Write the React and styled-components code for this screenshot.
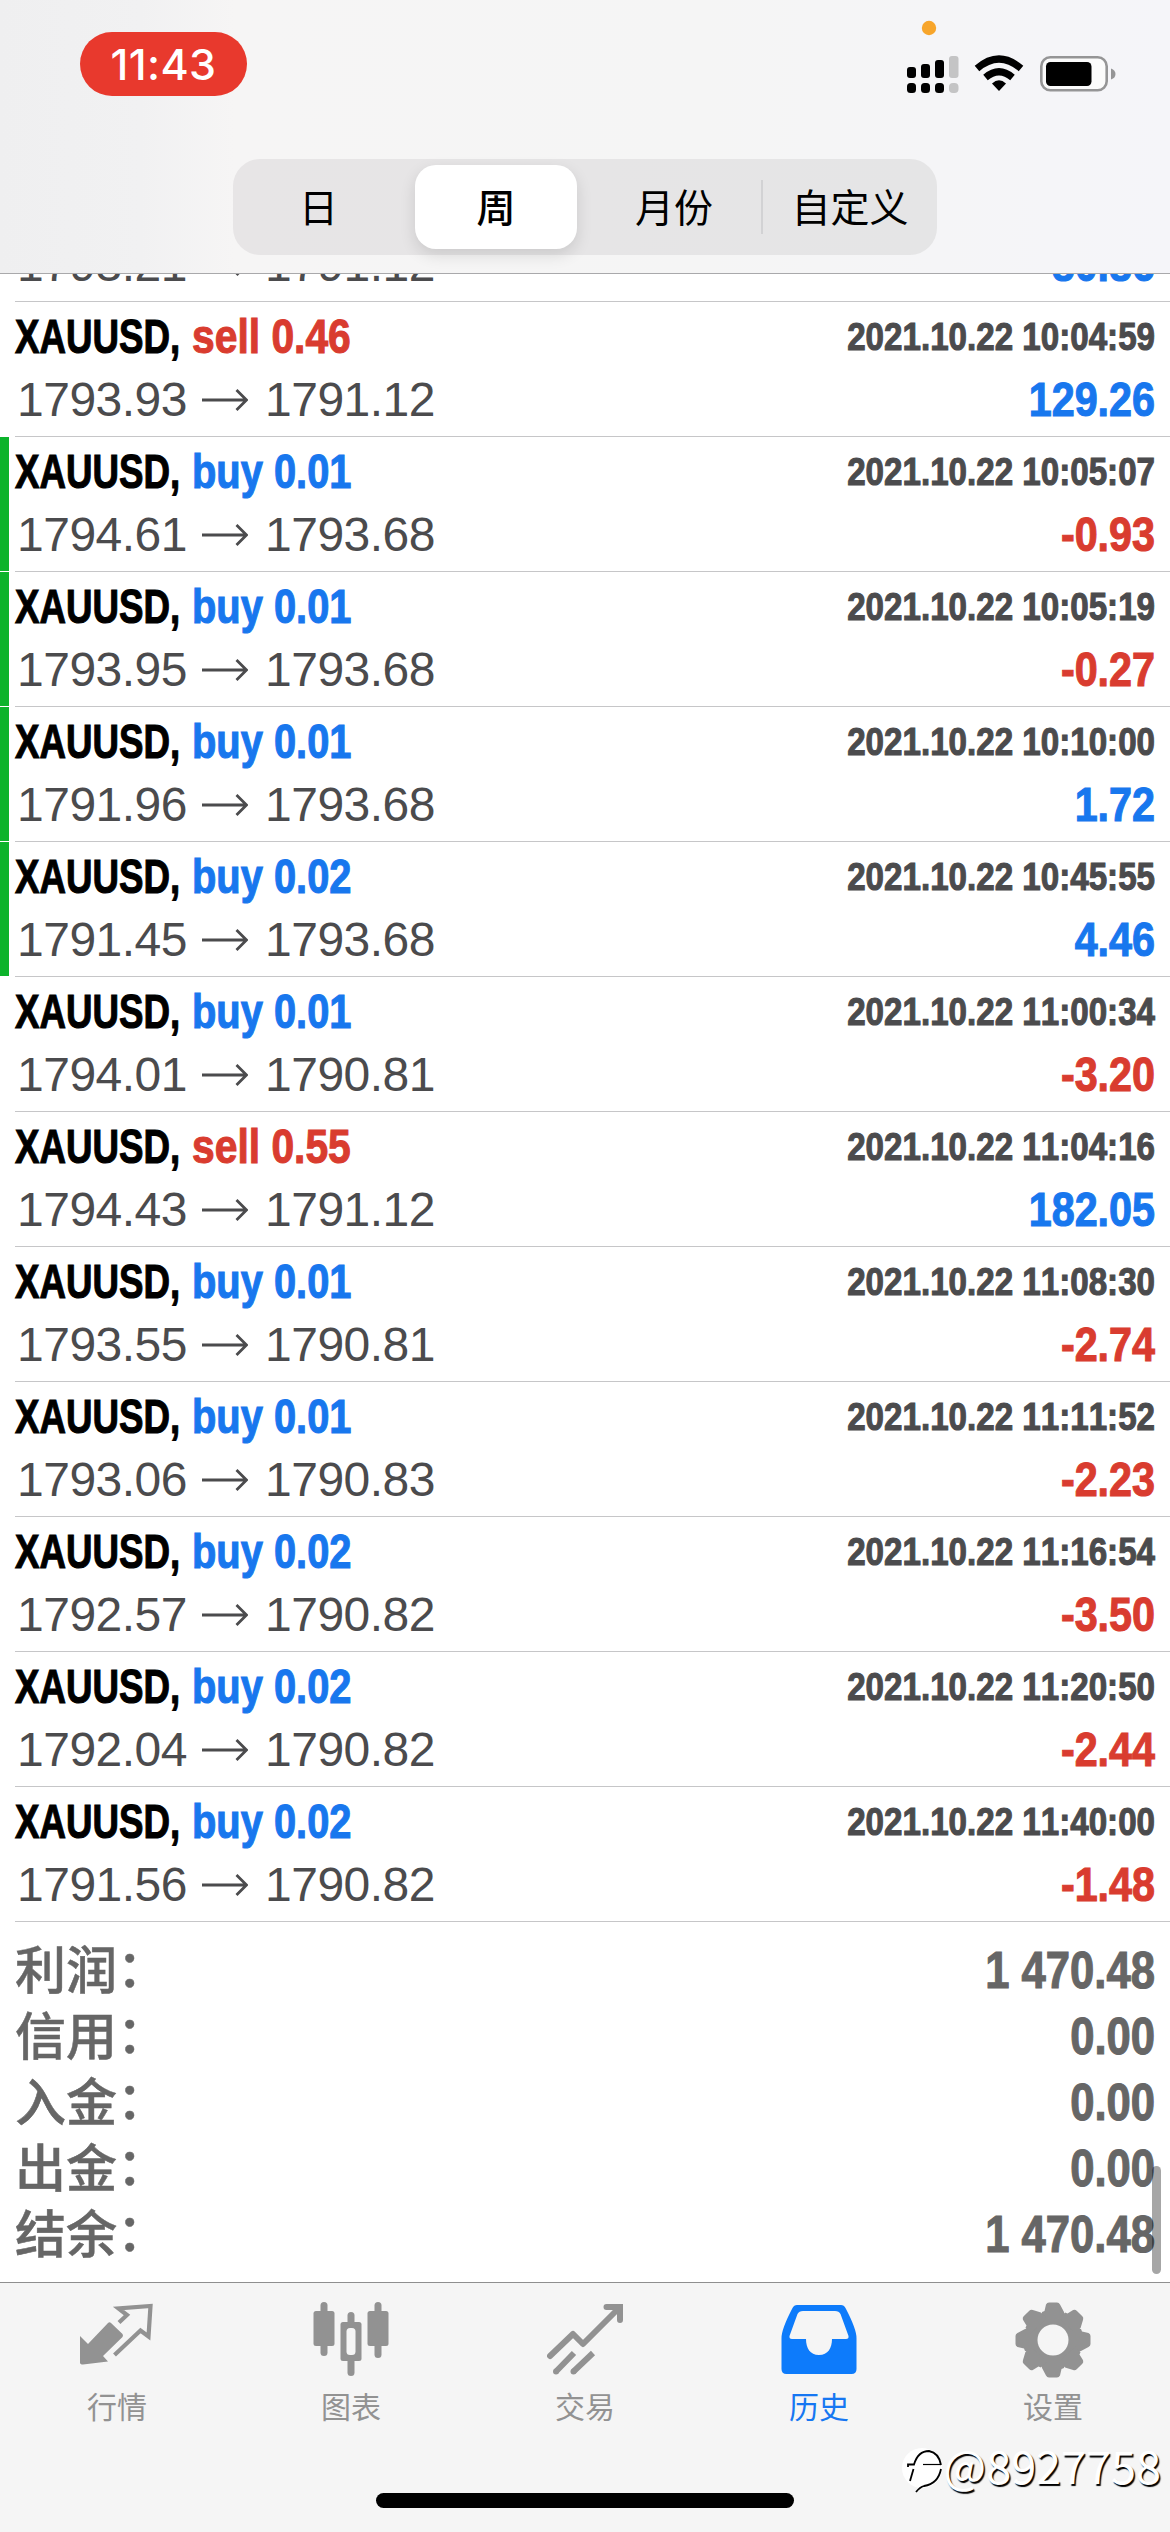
import React from 'react';
import styled, { createGlobalStyle } from 'styled-components';

const GlobalStyle = createGlobalStyle`
* {
    padding: 0;
    margin: 0;
    box-sizing: border-box;
}
body {
    background: #fff;
    font-family: 'Liberation Sans', 'Noto Sans CJK SC', sans-serif;
    font-kerning: none;
}
`;

const Screen = styled.div`
width: 1170px;
height: 2532px;
display: flex;
flex-direction: column;
overflow: hidden;
position: relative;
background: #fff;
`;

const Header = styled.header`
height: 274px;
flex: none;
display: flex;
flex-direction: column;
align-items: center;
background: linear-gradient(90deg, #efeff0 0%, #f1f1f2 12%, #f6f5f5 20%, #f5f5f5 60%, #f5f5f9 100%);
border-bottom: 1px solid #a9a9ab;
`;

const StatusBar = styled.div`
width: 100%;
height: 159px;
display: flex;
justify-content: space-between;
align-items: flex-start;
padding: 20px 54px 0 80px;
`;

const TimePill = styled.div`
width: 167px;
height: 64px;
margin-top: 12px;
border-radius: 32px;
background: #e8392d;
color: #fff;
font-family: Inter, sans-serif;
font-size: 43px;
font-weight: 500;
letter-spacing: 0.4px;
line-height: 64px;
text-align: center;
`;

const Segmented = styled.div`
width: 704px;
height: 96px;
display: flex;
padding: 6px 0;
border-radius: 27px;
background: linear-gradient(90deg, #e7e5e6, #e5e5e6);
`;

const Segment = styled.div`
width: ${(props) => props.$width}px;
margin: ${(props) => (props.$active ? '0 10px 0 11px' : '0')};
padding-bottom: 4px;
display: flex;
align-items: center;
justify-content: center;
font-family: 'Noto Sans CJK SC', sans-serif;
font-size: 39px;
line-height: 48px;
font-weight: ${(props) => (props.$active ? 500 : 400)};
color: #000;
border-radius: 21px;
background: ${(props) => (props.$active ? '#fff' : 'transparent')};
box-shadow: ${(props) => (props.$active ? '0 6px 16px rgba(0, 0, 0, 0.12)' : 'none')};
`;

const SegmentDivider = styled.div`
width: 2px;
height: 54px;
margin-top: 15px;
background: #d2d2d4;
`;

// Scrolled to its end, so the oldest visible row is cut off under the header
const List = styled.main`
height: 2008px;
flex: none;
display: flex;
flex-direction: column;
justify-content: flex-end;
overflow: hidden;
position: relative;
`;

const Row = styled.div`
flex: none;
display: flex;
`;

const Marker = styled.div`
width: 9px;
margin: 0 6px 1px 0;
background: ${(props) => (props.$on ? '#0cb32b' : 'transparent')};
`;

const RowBody = styled.div`
flex: 1;
border-bottom: 1px solid #c6c6c8;
padding: 3px 15px 5px 0;
`;

const Line = styled.div`
height: 63px;
display: flex;
justify-content: space-between;
align-items: center;
white-space: pre;
`;

const Cell = styled.div`
display: flex;
align-items: center;
`;

// Condensed bold text: squeezed horizontally inside a box of its final width
const Condensed = styled.span`
display: flex;
justify-content: ${(props) => (props.$right ? 'flex-end' : 'flex-start')};
width: ${(props) => props.$width}px;
font-size: ${(props) => props.$size || 48}px;
font-weight: 700;
color: ${(props) => props.$color};
transform: scaleX(${(props) => props.$scale});
transform-origin: ${(props) => (props.$right ? 'right' : 'left')} center;
-webkit-text-stroke: 1.1px ${(props) => props.$color};
white-space: pre;
`;

const Price = styled.span`
font-size: 48px;
letter-spacing: -0.5px;
color: #4b4b4d;
width: 174px;
padding-left: 2px;
`;

const Arrow = styled.svg`
width: 46px;
height: 24px;
margin: 0 15px 0 13px;
`;

const Summary = styled.div`
height: 360px;
flex: none;
padding: 15px 15px 0 15px;
`;

const SummaryLine = styled.div`
height: 66px;
display: flex;
justify-content: space-between;
align-items: center;
`;

const SummaryLabel = styled.span`
font-family: 'Noto Sans CJK SC', sans-serif;
font-size: 51px;
font-weight: 500;
line-height: 60px;
padding-bottom: 6px;
color: #666;
-webkit-text-stroke: 0.5px #666;
`;

const Colon = styled.span`
position: relative;
top: -2px;
`;

const Scrollbar = styled.div`
position: absolute;
right: 9px;
bottom: 8px;
width: 9px;
height: 108px;
border-radius: 5px;
background: rgba(0, 0, 0, 0.35);
`;

const TabBar = styled.nav`
height: 250px;
flex: none;
display: flex;
flex-direction: column;
align-items: center;
background: #f5f5f5;
border-top: 1px solid #8f8f8f;
`;

const Tabs = styled.div`
width: 100%;
height: 210px;
display: flex;
`;

const Tab = styled.div`
flex: 1;
display: flex;
flex-direction: column;
align-items: center;
padding-top: 19px;
font-family: 'Noto Sans CJK SC', sans-serif;
font-size: 30px;
line-height: 40px;
color: ${(props) => (props.$active ? '#1677f2' : '#929292')};

svg {
    width: 76px;
    height: 76px;
    margin-bottom: 7px;
}
`;

const HomeIndicator = styled.div`
width: 418px;
height: 15px;
border-radius: 8px;
background: #000;
`;

const Watermark = styled.div`
position: absolute;
right: 9px;
bottom: 35px;
display: flex;
align-items: center;
font-family: 'Noto Sans CJK SC', sans-serif;
font-size: 45px;
font-weight: 400;
line-height: 64px;
color: #fff;
text-shadow: 1.5px 1.5px 1px #000;

svg {
    width: 44px;
    height: 50px;
    margin: 10px -1px 0 0;
}
`;

const BLUE = '#1877ee';
const RED = '#d93c2f';

const trades = [
{ open: '1793.21', close: '1791.12', profit: '80.86', cut: true },
{ side: 'sell', lot: '0.46', open: '1793.93', close: '1791.12', time: '2021.10.22 10:04:59', profit: '129.26' },
{ side: 'buy', lot: '0.01', open: '1794.61', close: '1793.68', time: '2021.10.22 10:05:07', profit: '-0.93', marked: true },
{ side: 'buy', lot: '0.01', open: '1793.95', close: '1793.68', time: '2021.10.22 10:05:19', profit: '-0.27', marked: true },
{ side: 'buy', lot: '0.01', open: '1791.96', close: '1793.68', time: '2021.10.22 10:10:00', profit: '1.72', marked: true },
{ side: 'buy', lot: '0.02', open: '1791.45', close: '1793.68', time: '2021.10.22 10:45:55', profit: '4.46', marked: true },
{ side: 'buy', lot: '0.01', open: '1794.01', close: '1790.81', time: '2021.10.22 11:00:34', profit: '-3.20' },
{ side: 'sell', lot: '0.55', open: '1794.43', close: '1791.12', time: '2021.10.22 11:04:16', profit: '182.05' },
{ side: 'buy', lot: '0.01', open: '1793.55', close: '1790.81', time: '2021.10.22 11:08:30', profit: '-2.74' },
{ side: 'buy', lot: '0.01', open: '1793.06', close: '1790.83', time: '2021.10.22 11:11:52', profit: '-2.23' },
{ side: 'buy', lot: '0.02', open: '1792.57', close: '1790.82', time: '2021.10.22 11:16:54', profit: '-3.50' },
{ side: 'buy', lot: '0.02', open: '1792.04', close: '1790.82', time: '2021.10.22 11:20:50', profit: '-2.44' },
{ side: 'buy', lot: '0.02', open: '1791.56', close: '1790.82', time: '2021.10.22 11:40:00', profit: '-1.48' },
];

const totals = [
{ label: '利润', value: '1 470.48' },
{ label: '信用', value: '0.00' },
{ label: '入金', value: '0.00' },
{ label: '出金', value: '0.00' },
{ label: '结余', value: '1 470.48' },
];

const StatusIcons = () => (
    <svg width="212" height="76" viewBox="904 20 212 76">
        <circle cx="929" cy="28" r="7.2" fill="#f7a52b" />
        <g fill="#000">
            <rect x="907" y="67" width="9" height="11" rx="3" />
            <rect x="921" y="64" width="9" height="14" rx="3" />
            <rect x="935" y="60" width="9" height="18" rx="3" />
            <rect x="907" y="83" width="9" height="10" rx="3.5" />
            <rect x="921" y="83" width="9" height="10" rx="3.5" />
            <rect x="935" y="83" width="9" height="10" rx="3.5" />
        </g>
        <rect x="949" y="56" width="9.5" height="22" rx="3" fill="#c4c4c5" />
        <rect x="949" y="83" width="9.5" height="10" rx="4" fill="#c4c4c5" />
        <path d="M977 68.5Q999 49.5 1021 68.5" fill="none" stroke="#000" strokeWidth="7" />
        <path d="M985.5 77.5Q999 66 1012.5 77.5" fill="none" stroke="#000" strokeWidth="7" />
        <path d="M992 83.5Q999 77 1006 83.5L999 91Z" fill="#000" />
        <rect x="1041.3" y="57.3" width="65.4" height="33" rx="9" fill="#fbfbfb" stroke="#959596" strokeWidth="2.6" />
        <rect x="1046" y="62" width="45.5" height="24" rx="4.5" fill="#000" />
        <path d="M1111 68.5Q1115.5 70 1115.5 74T1111 79.5Z" fill="#959596" />
    </svg>
);

const QuotesIcon = () => (
    <svg viewBox="0 0 76 76">
        <path d="M1 34L9 42L29 21Q30.5 19.5 32 21L43.5 32Q44.5 33.5 43.5 35L24 54L29 59.5L4 62.5Q1 62.5 1 60.5Z" fill="currentColor" />
        <path d="M40 20.5L48 13L39.5 6.5L71.5 4L69.5 34.5L61.5 28.5L35.5 53" fill="none" stroke="currentColor" strokeWidth="4.2" />
    </svg>
);

const ChartIcon = () => (
    <svg viewBox="0 0 76 76">
        <g fill="currentColor">
            <rect x="7.5" y="0" width="7" height="54" rx="3.5" />
            <rect x="0.5" y="9" width="21" height="35" rx="2.5" />
            <rect x="61.5" y="0" width="7" height="56" rx="3.5" />
            <rect x="54.5" y="9" width="21" height="35" rx="2.5" />
            <rect x="34.5" y="10" width="7" height="64" rx="3.5" />
            <rect x="27.5" y="20" width="21" height="39" rx="2.5" />
        </g>
        <rect x="33.5" y="26" width="9" height="27" rx="3.5" fill="#f5f5f5" />
    </svg>
);

const TradeIcon = () => (
    <svg viewBox="0 0 76 76" fill="none" stroke="currentColor" strokeWidth="6" strokeLinecap="round">
        <path d="M3 54L26 32L36 42L72 6" strokeLinejoin="round" />
        <path d="M59.5 5H73V18" />
        <path d="M9 69.5L27 51M26.5 69.5L46 51" strokeLinecap="butt" />
        <g fill="currentColor" stroke="none">
            <circle cx="9" cy="69.5" r="3" />
            <circle cx="26.5" cy="69.5" r="3" />
        </g>
    </svg>
);

const HistoryIcon = () => (
    <svg viewBox="0 0 76 76">
        <path fillRule="evenodd" fill="#0d7bfb" d="M16 3H60Q63 3 64.5 6Q75.5 27 75.5 36V67Q75.5 72 70.5 72H5.5Q0.5 72 0.5 67V36Q0.5 27 11.5 6Q13 3 16 3ZM22 9Q18 9 16.5 12L8.5 34Q8 37 11 37H25C25 46 29 53 38 53S51 46 51 37H65Q68 37 67.5 34L59.5 12Q58 9 54 9Z" />
    </svg>
);

const TOOTH = 'M-8.5 -29L-7 -35.5Q-6 -37.5 -4 -37.5H4Q6 -37.5 7 -35.5L11 -28L11 -20H-11V-28Z';

const SettingsIcon = () => (
    <svg viewBox="-38 -38 76 76">
        <g fill="currentColor">
            <circle r="28.5" />
            {[0, 45, 90, 135, 180, 225, 270, 315].map((angle) => (
                <path key={angle} d={TOOTH} transform={`rotate(${angle})`} />
            ))}
        </g>
        <circle r="15.5" fill="#f5f5f5" />
    </svg>
);

const WatermarkLogo = () => (
    <svg viewBox="0 0 44 50" fill="none">
        <circle cx="21" cy="23" r="20" fill="#fff" />
        <g stroke="#000" strokeWidth="1.8">
            <path d="M7 22V19.5H13Q17 6 28 6Q38 8 40 20" />
            <path d="M22 19.5H40" strokeWidth="1.2" />
            <path d="M12.5 24L9 36" />
            <path d="M40 24Q37 39 23 41Q19 42 15 47" />
        </g>
    </svg>
);

const tabs = [
{ label: '行情', Icon: QuotesIcon },
{ label: '图表', Icon: ChartIcon },
{ label: '交易', Icon: TradeIcon },
{ label: '历史', Icon: HistoryIcon, active: true },
{ label: '设置', Icon: SettingsIcon },
];

const TradeRow = ({ trade }) => (
    <Row>
        <Marker $on={trade.marked} />
        <RowBody>
            {!trade.cut && (
                <Line>
                    <Cell>
                        <Condensed $width={177} $scale={0.765} $color="#000">XAUUSD,</Condensed>
                        <Condensed $width={170} $scale={trade.side === 'buy' ? 0.83 : 0.85} $color={trade.side === 'buy' ? BLUE : RED}>
                            {trade.side} {trade.lot}
                        </Condensed>
                    </Cell>
                    <Condensed $right $width={310} $size={39} $scale={0.85} $color="#4b4b4d">{trade.time}</Condensed>
                </Line>
            )}
            <Line>
                <Cell>
                    <Price>{trade.open}</Price>
                    <Arrow viewBox="0 0 46 24" fill="none" stroke="#4b4b4d" strokeWidth="2.8">
                        <path d="M0 12H44M34.5 2L44.5 12L34.5 22" />
                    </Arrow>
                    <Price>{trade.close}</Price>
                </Cell>
                <Condensed $right $width={130} $scale={0.86} $color={trade.profit.startsWith('-') ? RED : BLUE}>
                    {trade.profit}
                </Condensed>
            </Line>
        </RowBody>
    </Row>
);

const App = () => {
    return (
        <>
            <GlobalStyle />
            <Screen>
                <Header>
                    <StatusBar>
                        <TimePill>11:43</TimePill>
                        <StatusIcons />
                    </StatusBar>
                    <Segmented>
                        <Segment $width={171}>日</Segment>
                        <Segment $active $width={162}>周</Segment>
                        <Segment $width={174}>月份</Segment>
                        <SegmentDivider />
                        <Segment $width={174}>自定义</Segment>
                    </Segmented>
                </Header>

                <List>
                    {trades.map((trade, index) => (
                        <TradeRow key={index} trade={trade} />
                    ))}
                    <Summary>
                        {totals.map((item) => (
                            <SummaryLine key={item.label}>
                                <SummaryLabel>{item.label}<Colon>：</Colon></SummaryLabel>
                                <Condensed $right $width={200} $size={51} $scale={0.855} $color="#666">{item.value}</Condensed>
                            </SummaryLine>
                        ))}
                    </Summary>
                    <Scrollbar />
                </List>

                <TabBar>
                    <Tabs>
                        {tabs.map(({ label, Icon, active }) => (
                            <Tab key={label} $active={active}>
                                <Icon />
                                {label}
                            </Tab>
                        ))}
                    </Tabs>
                    <HomeIndicator />
                </TabBar>
                <Watermark>
                    <WatermarkLogo />
                    @8927758
                </Watermark>
            </Screen>
        </>
    );
};

export default App;
